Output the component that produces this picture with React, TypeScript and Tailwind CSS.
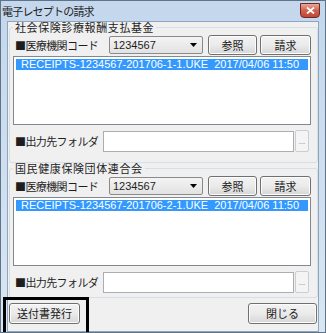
const jp = "font-['Noto_Sans_CJK_JP',sans-serif]";
const en = "font-['Liberation_Sans','Noto_Sans_CJK_JP',sans-serif]";

function WinButton({ label, className = '' }: { label: string; className?: string }) {
  return (
    <button
      type="button"
      className={`flex items-center justify-center rounded-[3px] border border-[#707070] bg-gradient-to-b from-[#f2f2f2] via-[#ebebeb] to-[#d6d6d6] text-[11px] leading-none text-[#1a1a1a] shadow-[inset_0_0_0_1px_#fcfcfc] ${className}`}
    >
      {label}
    </button>
  );
}

function Group({ title, file, bottomPad }: { title: string; file: string; bottomPad: string }) {
  return (
    <fieldset className={`rounded-[3px] border border-[#d5dfe5] pl-[3px] pr-[6px] ${bottomPad}`}>
      <legend className="px-[2px] text-[11px] leading-[11px] tracking-[0.6px] text-[#1e1e1e]">{title}</legend>
      <div className="mt-[2px] flex h-[20px] items-center">
        <span className="ml-[2px] w-[94px] text-[11px] leading-none tracking-[-0.6px]">■医療機関コード</span>
        <div className="flex h-[18px] w-[94px] items-center justify-between rounded-[2px] border border-[#8a8a8a] bg-gradient-to-b from-[#f4f4f4] to-[#e2e2e2] pl-[3px] pr-[5px]">
          <span className={`${en} text-[11px] leading-none`}>1234567</span>
          <svg width="7" height="4" viewBox="0 0 7 4">
            <path d="M0 0h7L3.5 4z" fill="#000" />
          </svg>
        </div>
        <WinButton label="参照" className="ml-[5px] h-[20px] w-[49px]" />
        <WinButton label="請求" className="ml-[3px] h-[20px] w-[51px]" />
      </div>
      <div className="mt-[1px] h-[69px] border border-[#828790] bg-white p-[2px]">
        <div className={`${en} h-[11px] bg-[#3399ff] pl-[5px] text-[11px] leading-[11px] whitespace-pre text-white`}>
          {file}
        </div>
      </div>
      <div className="mt-[5px] flex h-[22px] items-center">
        <span className="ml-[2px] w-[88px] text-[11px] leading-none tracking-[-0.6px]">■出力先フォルダ</span>
        <div className="h-[21px] w-[191px] border border-[#abadb3] bg-white" />
        <div className="ml-[1px] flex h-[22px] w-[14px] items-center justify-center rounded-[2px] border border-[#c9ced4] bg-[#f4f4f4] text-[8px] text-[#9a9a9a]">
          ...
        </div>
      </div>
    </fieldset>
  );
}

export default function App() {
  return (
    <div className={`${jp} relative flex h-[333px] w-[326px] flex-col overflow-hidden border border-[#5f7389] bg-gradient-to-b from-[#c4d7ec] to-[#d9e6f3] text-[#1e1e1e]`}>
      <div className="flex h-[20px] items-start justify-between">
        <span className="mt-[4px] ml-[1px] text-[11px] leading-[12px] tracking-[-0.8px] text-[#1e1e1e]">電子レセプトの請求</span>
        <div className="mt-[2px] mr-[5px] flex h-[15px] w-[20px] items-center justify-center rounded-b-[4px] border border-[#6e2b24] bg-gradient-to-b from-[#e8a796] via-[#d0614f] to-[#c24735]">
          <svg width="9" height="7" viewBox="0 0 9 7">
            <path d="M1 0.5l7 6M8 0.5l-7 6" stroke="#fff" strokeWidth="1.8" />
          </svg>
        </div>
      </div>
      <div className="mx-[6px] flex flex-1 flex-col border border-[#8fa4bd] bg-[#f0f0f0] px-[1px]">
        <Group title="社会保険診療報酬支払基金" file="RECEIPTS-1234567-201706-1-1.UKE  2017/04/06 11:50" bottomPad="pb-[10px]" />
        <Group title="国民健康保険団体連合会" file="RECEIPTS-1234567-201706-2-1.UKE  2017/04/06 11:50" bottomPad="pb-[4px]" />
        <div className="mt-[5px] flex justify-between">
          <WinButton label="送付書発行" className="h-[21px] w-[71px]" />
          <WinButton label="閉じる" className="h-[21px] w-[69px]" />
        </div>
      </div>
      <div className="absolute top-[296px] left-[2px] h-[40px] w-[86px] border-[3px] border-black" />
    </div>
  );
}
